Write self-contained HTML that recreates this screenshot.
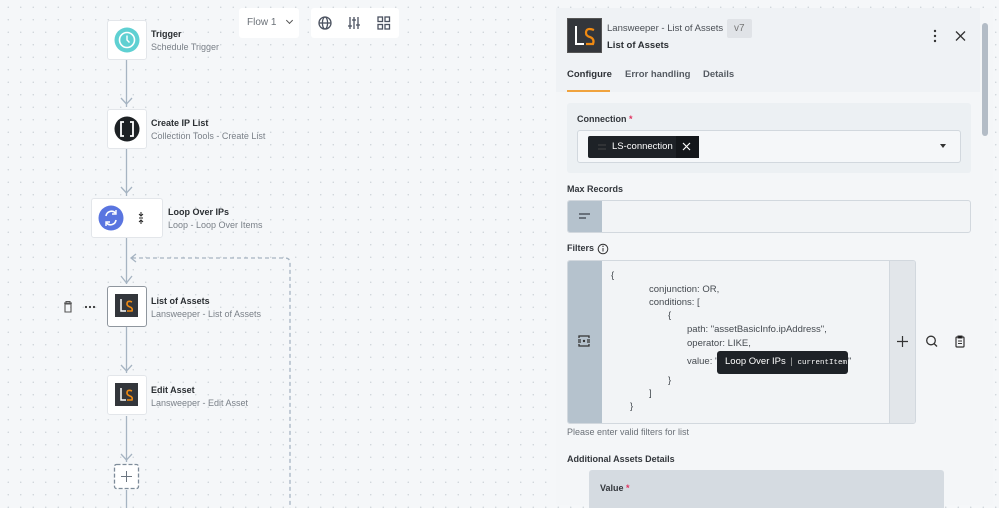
<!DOCTYPE html>
<html><head><meta charset="utf-8"><style>
*{box-sizing:border-box;margin:0;padding:0}
body{width:999px;height:508px;overflow:hidden;font-family:"Liberation Sans",sans-serif;background:#f5f7f9;background-image:radial-gradient(circle,#cdd2d7 0.6px,transparent 0.8px);background-size:12.5px 12.5px;background-position:2px 1px;position:relative;color:#2b2f33}
.a{position:absolute}
.node{position:absolute;background:#fff;border:1px solid #e3e6ea;border-radius:3px}
.t{position:absolute;font-size:9px;font-weight:bold;color:#2b2f33;white-space:nowrap}
.s{position:absolute;font-size:9px;color:#7a8088;white-space:nowrap}
.ls{position:absolute;background:#33363b;width:23px;height:23px}
.lbl{position:absolute;font-size:9px;font-weight:bold;color:#33373c;white-space:nowrap}
.code{position:absolute;font-size:9.5px;color:#454a50;white-space:nowrap}
</style></head><body>
<svg class="a" style="left:0;top:0" width="560" height="508">
 <g stroke="#a6b4c2" stroke-width="1.3" fill="none">
  <line x1="126.5" y1="60" x2="126.5" y2="107"/><polyline points="121,98 126.5,104 132,98"/>
  <line x1="126.5" y1="149" x2="126.5" y2="196"/><polyline points="121,187 126.5,193 132,187"/>
  <line x1="126.5" y1="238" x2="126.5" y2="284"/><polyline points="121,276 126.5,283 132,276"/>
  <line x1="126.5" y1="327" x2="126.5" y2="373"/><polyline points="121,365 126.5,371 132,365"/>
  <line x1="126.5" y1="416" x2="126.5" y2="462"/><polyline points="121,454 126.5,460 132,454"/>
  <line x1="126.5" y1="490" x2="126.5" y2="508"/>
  <path d="M132,258 H285 Q290,258 290,263 V508" stroke-dasharray="4,3"/>
  <polyline points="136,254 131,258 136,262"/>
 </g>
 <rect x="114.5" y="464.5" width="24" height="24" rx="2" fill="#fff" stroke="#7d8b99" stroke-width="1.3" stroke-dasharray="4,2"/>
 <path d="M126.5,471v11M121,476.5h11" stroke="#6b7580" stroke-width="1"/>
</svg>
<div class="a" style="left:239px;top:8px;width:60px;height:30px;background:#fff;border-radius:3px;font-size:10px;color:#6b7178;padding:9px 0 0 8px">Flow 1 <span style="margin-left:8px;display:inline-block;width:5px;height:5px;border-right:1.3px solid #555;border-bottom:1.3px solid #555;transform:rotate(45deg);position:relative;top:-2px"></span></div>
<div class="a" style="left:311px;top:8px;width:88px;height:30px;background:#fff;border-radius:3px"></div>
<svg class="a" style="left:311px;top:8px" width="88" height="30" fill="none" stroke="#4b5260" stroke-width="1.3">
 <circle cx="14" cy="15" r="6"/><ellipse cx="14" cy="15" rx="2.6" ry="6"/><line x1="8" y1="15" x2="20" y2="15"/>
 <path d="M39,9v12M43,9v12M47,9v12M37,18h4M41,12h4M45,17h4"/>
 <rect x="67" y="9" width="4.5" height="4.5"/><rect x="74" y="9" width="4.5" height="4.5"/><rect x="67" y="16.5" width="4.5" height="4.5"/><rect x="74" y="16.5" width="4.5" height="4.5"/>
</svg>
<div class="node" style="left:107px;top:20px;width:40px;height:40px"></div>
<svg class="a" style="left:107px;top:20px" width="40" height="40"><circle cx="20" cy="20" r="12.5" fill="#5fd0d2"/><circle cx="20" cy="20" r="7.5" fill="none" stroke="#fff" stroke-width="1.6"/><path d="M20,15.5V20l2.5,2.5" stroke="#fff" stroke-width="1.4" fill="none"/></svg>
<div class="t" style="left:151px;top:29px">Trigger</div><div class="s" style="left:151px;top:42px">Schedule Trigger</div>

<div class="node" style="left:107px;top:109px;width:40px;height:40px"></div>
<svg class="a" style="left:107px;top:109px" width="40" height="40"><circle cx="20" cy="20" r="12.5" fill="#1d2124"/><path d="M17,13h-3v14h3M23,13h3v14h-3" stroke="#fff" stroke-width="1.8" fill="none"/></svg>
<div class="t" style="left:151px;top:118px">Create IP List</div><div class="s" style="left:151px;top:131px">Collection Tools - Create List</div>

<div class="node" style="left:91px;top:198px;width:72px;height:40px"></div>
<svg class="a" style="left:91px;top:198px" width="72" height="40"><circle cx="20" cy="20" r="12.5" fill="#5a75e0"/><path d="M15,18a5.5,5.5 0 0 1 9.5,-3M25,22a5.5,5.5 0 0 1 -9.5,3" stroke="#fff" stroke-width="1.6" fill="none"/><path d="M25,12v4h-4M15,28v-4h4" stroke="#fff" stroke-width="1.4" fill="none"/><path d="M50,14v3M48,16l2,2 2,-2M48,20h4M50,26v-3M48,24l2,-2 2,2" stroke="#222" stroke-width="1" fill="none"/></svg>
<div class="t" style="left:168px;top:207px">Loop Over IPs</div><div class="s" style="left:168px;top:220px">Loop - Loop Over Items</div>

<div class="node" style="left:107px;top:286px;width:40px;height:41px;border:1.3px solid #8f969e"></div>
<div class="ls" style="left:115px;top:294px"><svg width="23" height="23"><path d="M6,5v12h5" stroke="#fff" stroke-width="1.5" fill="none"/><path d="M17,8q-5,-2 -5,2q0,2 3,3q3,1 2,4h-5" stroke="#f08a12" stroke-width="1.6" fill="none"/></svg></div>
<svg class="a" style="left:62px;top:300px" width="40" height="14"><path d="M2,3h8M4,3v-1.5h4V3M3,4h6v8H3z" stroke="#555" stroke-width="1.1" fill="none"/><circle cx="24" cy="7" r="1.1" fill="#333"/><circle cx="28" cy="7" r="1.1" fill="#333"/><circle cx="32" cy="7" r="1.1" fill="#333"/></svg>
<div class="t" style="left:151px;top:296px">List of Assets</div><div class="s" style="left:151px;top:309px">Lansweeper - List of Assets</div>

<div class="node" style="left:107px;top:375px;width:40px;height:40px"></div>
<div class="ls" style="left:115px;top:383px"><svg width="23" height="23"><path d="M6,5v12h5" stroke="#fff" stroke-width="1.5" fill="none"/><path d="M17,8q-5,-2 -5,2q0,2 3,3q3,1 2,4h-5" stroke="#f08a12" stroke-width="1.6" fill="none"/></svg></div>
<div class="t" style="left:151px;top:385px">Edit Asset</div><div class="s" style="left:151px;top:398px">Lansweeper - Edit Asset</div>

<div class="a" style="left:556px;top:8px;width:437px;height:497px;background:#f4f6f8;border-radius:3px"></div>
<div class="a" style="left:556px;top:8px;width:424px;height:84px;background:#eff2f5"></div>
<div class="a" style="left:982px;top:23px;width:6px;height:113px;background:#b3bcc6;border-radius:3px"></div>
<div class="a" style="left:567px;top:18px;width:35px;height:35px;background:#33363b;border:1px solid #555"><svg width="35" height="35"><path d="M8,7v18h8" stroke="#fff" stroke-width="2" fill="none"/><path d="M26,11q-8,-3 -8,3q0,3 4,4q5,2 3,7h-7" stroke="#f08a12" stroke-width="2.2" fill="none"/></svg></div>
<div class="a" style="left:607px;top:23px;font-size:9.5px;color:#4a4f55;white-space:nowrap">Lansweeper - List of Assets</div>
<div class="a" style="left:727px;top:19px;width:25px;height:19px;background:#e0e3e7;border-radius:2px;font-size:10px;color:#777;padding:4px 0 0 7px">v7</div>
<div class="a" style="left:607px;top:40px;font-size:9.5px;font-weight:bold">List of Assets</div>
<svg class="a" style="left:928px;top:28px" width="40" height="16"><circle cx="7" cy="3" r="1.2" fill="#333"/><circle cx="7" cy="8" r="1.2" fill="#333"/><circle cx="7" cy="13" r="1.2" fill="#333"/><path d="M28,3.5l9,9M37,3.5l-9,9" stroke="#333" stroke-width="1.3"/></svg>
<div class="a" style="left:567px;top:69px;font-size:9.5px;font-weight:bold;color:#2f3338">Configure</div>
<div class="a" style="left:625px;top:69px;font-size:9.5px;font-weight:bold;color:#555b62">Error handling</div>
<div class="a" style="left:703px;top:69px;font-size:9.5px;font-weight:bold;color:#555b62">Details</div>
<div class="a" style="left:567px;top:90px;width:43px;height:2px;background:#f0a33e"></div>

<div class="a" style="left:567px;top:103px;width:404px;height:70px;background:#ecf0f3;border-radius:3px"></div>
<div class="lbl" style="left:577px;top:114px">Connection <span style="color:#e0335f">*</span></div>
<div class="a" style="left:577px;top:130px;width:384px;height:33px;border:1px solid #d2d8de;border-radius:3px;background:#f5f7f9"></div>
<div class="a" style="left:588px;top:136px;width:111px;height:22px;background:#1e2227;border-radius:2px"></div>
<div class="a" style="left:676px;top:136px;width:23px;height:22px;background:#14171b"></div>
<div class="a" style="left:612px;top:141px;font-size:9.5px;color:#fff">LS-connection</div>
<svg class="a" style="left:596px;top:141px" width="100" height="12"><path d="M2,4h8M2,8h8" stroke="#444" stroke-width="1"/><path d="M87,2l7,7M94,2l-7,7" stroke="#fff" stroke-width="1.2"/></svg>
<div class="a" style="left:940px;top:144px;border-left:3.5px solid transparent;border-right:3.5px solid transparent;border-top:4px solid #333"></div>

<div class="lbl" style="left:567px;top:184px">Max Records</div>
<div class="a" style="left:567px;top:200px;width:404px;height:33px;border:1px solid #d2d8de;border-radius:3px;background:#f2f4f6;overflow:hidden"><div style="width:34px;height:33px;background:#b5c2cd"></div></div>
<svg class="a" style="left:578px;top:210px" width="14" height="12"><path d="M1,4h11M1,8h7" stroke="#3a4048" stroke-width="1.3"/></svg>

<div class="lbl" style="left:567px;top:243px">Filters</div>
<svg class="a" style="left:597px;top:243px" width="12" height="12"><circle cx="6" cy="6" r="4.8" fill="none" stroke="#333" stroke-width="1"/><path d="M6,5v3.5" stroke="#333"/><circle cx="6" cy="3.3" r=".7" fill="#333"/></svg>
<div class="a" style="left:567px;top:260px;width:349px;height:164px;border:1px solid #d2d8de;border-radius:3px;background:#f2f4f6;overflow:hidden"><div style="width:34px;height:164px;background:#b5c2cd"></div><div style="position:absolute;right:0;top:0;width:26px;height:164px;background:#e2e6ea;border-left:1px solid #d2d8de"></div></div>
<svg class="a" style="left:576px;top:333px" width="16" height="16"><path d="M3,5v-2h10v2M3,11v2h10v-2M2,7h3M11,7h3M2,9h3M11,9h3" stroke="#333" stroke-width="1.3" fill="none"/><circle cx="8" cy="8" r="1.2" fill="#333"/></svg>
<svg class="a" style="left:894px;top:333px" width="80" height="16"><path d="M8.5,3v11M3,8.5h11" stroke="#333" stroke-width="1.2"/><circle cx="37" cy="7.5" r="4.3" fill="none" stroke="#333" stroke-width="1.3"/><path d="M40,10.5l3,3" stroke="#333" stroke-width="1.3"/><rect x="62" y="4" width="8" height="10" rx="1" fill="none" stroke="#333" stroke-width="1.2"/><path d="M64,3h4v2h-4zM64,8h4M64,10.5h4" stroke="#333" stroke-width="1"/></svg>
<div class="code" style="left:611px;top:270px">{</div>
<div class="code" style="left:649px;top:284px">conjunction: OR,</div>
<div class="code" style="left:649px;top:297px">conditions: [</div>
<div class="code" style="left:668px;top:310px">{</div>
<div class="code" style="left:687px;top:324px">path: "assetBasicInfo.ipAddress",</div>
<div class="code" style="left:687px;top:338px">operator: LIKE,</div>
<div class="code" style="left:687px;top:356px">value: "</div>
<div class="code" style="left:848px;top:356px">"</div>
<div class="a" style="left:717px;top:351px;width:131px;height:23px;background:#1e2227;border-radius:3px;font-size:9.5px;color:#fff;padding:5px 0 0 8px;white-space:nowrap;overflow:hidden">Loop Over IPs <span style="color:#aaa;margin:0 2px">|</span> <span style="font-family:'Liberation Mono',monospace;font-size:7.5px">currentItem</span></div>
<div class="code" style="left:668px;top:375px">}</div>
<div class="code" style="left:649px;top:388px">]</div>
<div class="code" style="left:630px;top:401px">}</div>
<div class="a" style="left:567px;top:427px;font-size:9px;color:#6b7178">Please enter valid filters for list</div>
<div class="lbl" style="left:567px;top:454px">Additional Assets Details</div>
<div class="a" style="left:589px;top:470px;width:355px;height:38px;background:#d5dbe1;border-radius:3px 3px 0 0"></div>
<div class="lbl" style="left:600px;top:483px">Value <span style="color:#e0335f">*</span></div>
</body></html>
